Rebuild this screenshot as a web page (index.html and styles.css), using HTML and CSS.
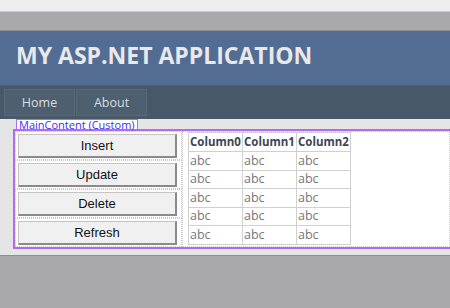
FILE: index.html
```html
<!DOCTYPE html>
<html lang="en">
<head>
  <meta charset="UTF-8">
  <title>My ASP.NET Application</title>
  <link rel="stylesheet" href="styles.css">
</head>
<body>

  <div class="top-strip"></div>
  <div class="frame-bar"></div>

  <div class="page">
    <header class="header">
      <h1>MY ASP.NET APPLICATION</h1>
    </header>

    <nav class="menu">
      <a class="menu-item" href="#">Home</a>
      <a class="menu-item" href="#">About</a>
    </nav>

    <div class="main">
      <div class="tag">MainContent (Custom)</div>
      <div class="placeholder">
        <div class="layout">
          <div class="buttons">
            <div class="cell"><button>Insert</button></div>
            <div class="cell"><button>Update</button></div>
            <div class="cell"><button>Delete</button></div>
            <div class="cell"><button>Refresh</button></div>
          </div>
          <div class="grid-cell">
            <table class="grid">
              <tr><th>Column0</th><th>Column1</th><th>Column2</th></tr>
              <tr><td>abc</td><td>abc</td><td>abc</td></tr>
              <tr><td>abc</td><td>abc</td><td>abc</td></tr>
              <tr><td>abc</td><td>abc</td><td>abc</td></tr>
              <tr><td>abc</td><td>abc</td><td>abc</td></tr>
              <tr><td>abc</td><td>abc</td><td>abc</td></tr>
            </table>
          </div>
        </div>
      </div>
    </div>
  </div>

  <div class="bottom"></div>

</body>
</html>
```

FILE: styles.css
```css
* {
  margin: 0;
  padding: 0;
  box-sizing: border-box;
}

body {
  font-family: 'Open Sans', 'Noto Sans', sans-serif;
  background: #a9a8ac;
  width: 450px;
  height: 308px;
  overflow: hidden;
}

.top-strip {
  height: 12px;
  background: #eeeeee;
  border-bottom: 1px solid #e6b4f2;
}

.frame-bar {
  height: 19px;
  background: #a9a8ac;
  border-bottom: 1px solid #8e8d92;
}

.header {
  height: 54px;
  background: #536c94;
  padding: 9px 0 0 16px;
}

.header h1 {
  font-size: 23px;
  font-weight: bold;
  color: #e9e9ea;
  line-height: 30px;
}

.menu {
  height: 34px;
  background: #475968;
  border-top: 1px solid #4d5e70;
  padding: 3px 0 0 4px;
  display: flex;
}

.menu-item {
  display: block;
  width: 71px;
  height: 27px;
  line-height: 25px;
  text-align: center;
  font-size: 12.5px;
  color: #d9dde2;
  text-decoration: none;
  background: #4e5f6f;
  border: 1px solid #57687a;
  margin-right: 1px;
}

.main {
  background: #e5e5e5;
  height: 137px;
  border-bottom: 1px solid #8e8d92;
}

.tag {
  width: fit-content;
  margin-left: 16px;
  height: 10px;
  padding: 0 2px;
  font-size: 11px;
  line-height: 10px;
  color: #3b2bff;
  background: #ffffff;
  border: 1px solid #b26bf0;
  border-bottom: none;
}

.placeholder {
  margin-left: 13px;
  background: #ffffff;
  border: 2px solid #b26bf0;
  border-right: none;
  height: 120px;
}

.layout {
  display: flex;
  height: 100%;
}

.buttons {
  width: 167px;
  display: flex;
  flex-direction: column;
}

.cell {
  border: 1px dotted #c8c8c8;
  padding: 2px;
  height: 29px;
}

.cell button {
  display: block;
  width: 159px;
  height: 24px;
  font-family: 'Liberation Sans', Arial, sans-serif;
  font-size: 13px;
  color: #111111;
  background: #f0f0f0;
  border: 1px solid #c4c4c4;
  border-right: 2px solid #8a8a8a;
  border-bottom: 2px solid #8a8a8a;
}

.grid-cell {
  flex: 1;
  border: 1px dotted #c8c8c8;
  padding: 0 0 0 5px;
}

.grid {
  border-collapse: collapse;
  border: 1px solid #b4b4b4;
}

.grid th,
.grid td {
  border: 1px solid #d0d0d0;
  height: 18.5px;
  padding: 0 1px;
  text-align: left;
  font-size: 12.5px;
  line-height: 16px;
}

.grid th {
  font-weight: bold;
  font-size: 11.5px;
  color: #3e4556;
  height: 19px;
}

.grid td {
  color: #777777;
  width: 54px;
}
```
